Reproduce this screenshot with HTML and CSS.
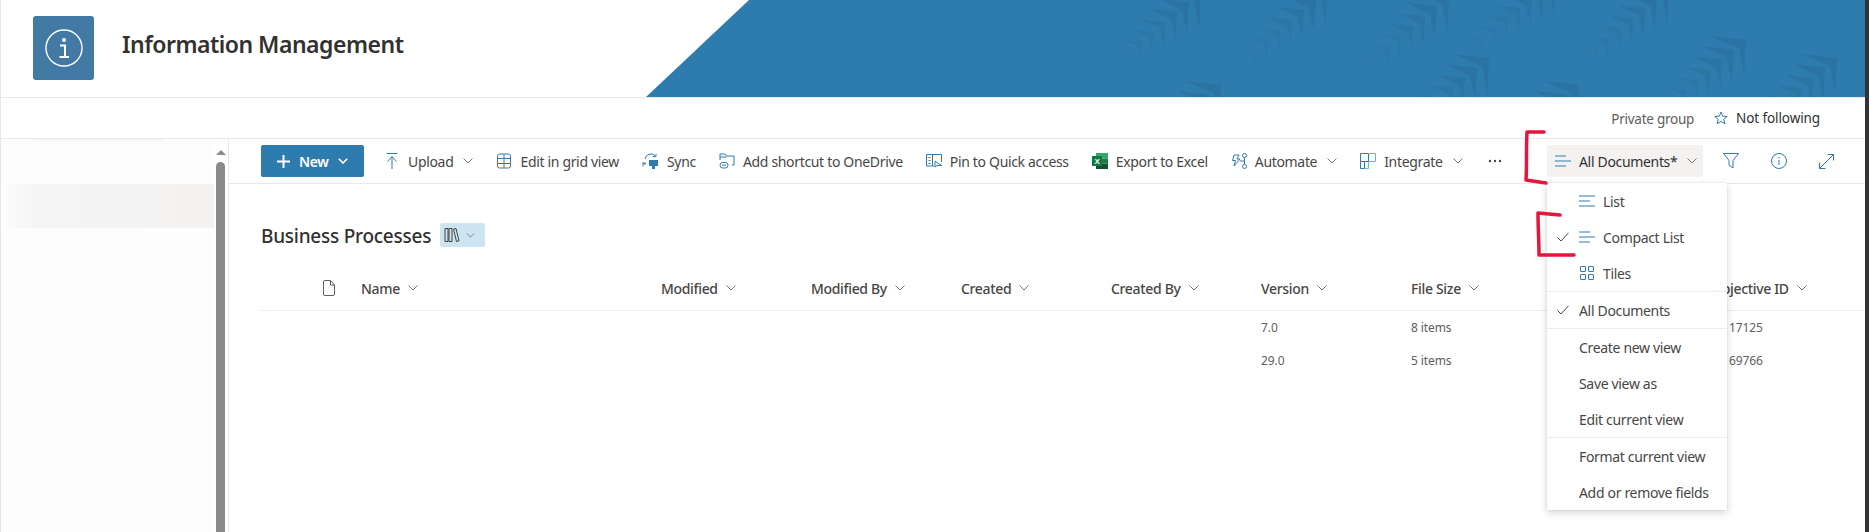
FILE: index.html
```html
<!DOCTYPE html>
<html lang="en">
<head>
<meta charset="utf-8">
<title>Information Management</title>
<link rel="stylesheet" href="styles.css">
</head>
<body>
<svg class="sprite" width="0" height="0" aria-hidden="true">
  <defs>
    <symbol id="chev" viewBox="0 0 10 6"><path d="M.5.5 5 5 9.500.5" fill="none" stroke="currentColor" stroke-width="1"/></symbol>
    <symbol id="chev-bold" viewBox="0 0 10 6"><path d="M.8.8 5 5 9.200.8" fill="none" stroke="currentColor" stroke-width="1.600"/></symbol>
    <symbol id="check" viewBox="0 0 12 10"><path d="M.5 5.500 4 9 11.500.8" fill="none" stroke="#484644" stroke-width="1"/></symbol>
    <symbol id="lines-compact" viewBox="0 0 16 12"><path d="M0 1h11M0 6h16M0 11h11" fill="none" stroke="#2e7cad" stroke-width="1"/></symbol>
    <symbol id="lines-list" viewBox="0 0 16 12"><path d="M0 1h16M0 6h11M0 11h16" fill="none" stroke="#2e7cad" stroke-width="1"/></symbol>
    <g id="chevs" fill="#296f9c">
      <polygon points="-36,-4 0,0 -2,36 -7,8" opacity=".7"/>
      <polygon points="-44,6 -12,10 -14,42 -19,18" opacity=".65"/>
      <polygon points="-52,17 -24,20 -25.5,48 -30,27" opacity=".6"/>
      <polygon points="-60,27.5 -36,30 -37,54 -41,36" opacity=".5"/>
      <polygon points="-68,38 -48,40 -49,60 -52,45" opacity=".42"/>
      <polygon points="-77,48 -60,50 -61,67 -64,54" opacity=".34"/>
      <polygon points="-86,59 -72,60 -73,74 -75,63" opacity=".26"/>
    </g>
  </defs>
</svg>

<div class="app">
  <header class="site-head">
    <div class="logo">
      <svg width="38" height="38" viewBox="0 0 38 38"><circle cx="19" cy="19" r="18" fill="none" stroke="#fff" stroke-width="1.400"/><circle cx="19" cy="11" r="2" fill="#fff"/><path d="M15 16.500h5v11M14.500 28h9.500" fill="none" stroke="#fff" stroke-width="2"/></svg>
    </div>
    <h1 class="site-title">Information Management</h1>
    <svg class="banner" width="1220" height="97" viewBox="645 0 1220 97" aria-hidden="true">
      <polygon points="646,97 749,0 1865,0 1865,97" fill="#2e7cad"/>
      <use href="#chevs" x="1201" y="-8"/>
      <use href="#chevs" x="1328" y="-10"/>
      <use href="#chevs" x="1449" y="-4"/>
      <use href="#chevs" x="1556" y="-22"/>
      <use href="#chevs" x="1669" y="-12"/>
      <use href="#chevs" x="1221" y="85"/>
      <use href="#chevs" x="1489" y="58"/>
      <use href="#chevs" x="1579" y="85"/>
      <use href="#chevs" x="1746" y="40"/>
      <use href="#chevs" x="1837" y="58"/>
    </svg>
  </header>

  <div class="status-bar">
    <span class="privacy">Private group</span>
    <span class="follow">
      <svg width="14" height="14" viewBox="0 0 14 14"><path d="M7 1 8.700 5.200 13.200 5.500 9.700 8.400 10.900 12.800 7 10.400 3.100 12.800 4.300 8.400.8 5.500 5.300 5.200Z" fill="none" stroke="#2e7cad"/></svg>
      Not following
    </span>
  </div>

  <div class="workspace">
    <aside class="side">
      <div class="side-nav">
        <div class="side-smudge"></div>
        <div class="side-active"></div>
      </div>
      <div class="scroll">
        <div class="scroll-arrow"></div>
        <div class="scroll-thumb"></div>
      </div>
    </aside>

    <main class="content">
      <div class="toolbar">
        <button class="new-btn">
          <svg width="13" height="13" viewBox="0 0 13 13"><path d="M6.500 0v13M0 6.500h13" stroke="#fff" stroke-width="2"/></svg>
          <span>New</span>
          <svg class="chev-new" width="10" height="6"><use href="#chev-bold"/></svg>
        </button>

        <span class="cmd">
          <svg class="ic" width="16" height="16" viewBox="0 0 16 16"><path d="M2.500.5h11M8 3.500V16M3.500 8.500 8 3.500l4.500 5" fill="none" stroke="#2e7cad"/></svg>
          Upload
          <svg class="chev" width="10" height="6"><use href="#chev"/></svg>
        </span>
        <span class="cmd">
          <svg class="ic" width="16" height="16" viewBox="0 0 16 16"><rect x="1.500" y="1" width="13" height="14" rx="2" fill="none" stroke="#2e7cad"/><path d="M1.500 5.500h13M1.500 10.500h13M8 1v14" stroke="#2e7cad"/></svg>
          Edit in grid view
        </span>
        <span class="cmd">
          <svg class="ic" width="17" height="16" viewBox="0 0 17 16"><path d="M3 6a6 6 0 0 1 10-3.500M14 1v2.500h-3M1 9.500l2.500 2.500M1 13.500V10h3" fill="none" stroke="#2e7cad"/><rect x="7" y="7" width="9" height="6" fill="#2e7cad"/><rect x="10" y="13" width="3" height="3" fill="#2e7cad"/></svg>
          Sync
        </span>
        <span class="cmd">
          <svg class="ic" width="16" height="16" viewBox="0 0 16 16"><path d="M1 7V1h5l1.500 2H15v9h-2M1 4h6.500" fill="none" stroke="#2e7cad"/><rect x="1" y="9.500" width="8" height="5.500" rx="2.700" fill="none" stroke="#2e7cad"/><path d="M3 12.200h4" stroke="#2e7cad"/></svg>
          Add shortcut to OneDrive
        </span>
        <span class="cmd">
          <svg class="ic" width="16" height="16" viewBox="0 0 16 16"><path d="M8 13H.5V1.500h15V9M2.500 4.500h2M2.500 7.500h2M2.500 10.500h2M6.500 2v11" fill="none" stroke="#2e7cad"/><path d="M9 8v6l2-1.500h4.500z" fill="none" stroke="#2e7cad"/></svg>
          Pin to Quick access
        </span>
        <span class="cmd">
          <svg class="ic" width="16" height="16" viewBox="0 0 16 16"><rect x="4" y="0" width="12" height="5.500" fill="#33a56e"/><rect x="4" y="5.500" width="12" height="5" fill="#1f7a4b"/><rect x="4" y="10.500" width="12" height="5.500" fill="#14522f"/><rect x="0" y="3" width="10" height="10" fill="#107c41"/><text x="5" y="11" class="xl">X</text></svg>
          Export to Excel
        </span>
        <span class="cmd">
          <svg class="ic" width="16" height="16" viewBox="0 0 16 16"><path d="M3 2h5L6 6h3l-6 7 1.500-5.500H1.500z" fill="none" stroke="#2e7cad"/><circle cx="13.500" cy="2.500" r="2" fill="none" stroke="#2e7cad"/><circle cx="13.500" cy="13.500" r="2" fill="none" stroke="#2e7cad"/><path d="M13.500 4.500v7M9 8h4.500" fill="none" stroke="#2e7cad"/></svg>
          Automate
          <svg class="chev" width="10" height="6"><use href="#chev"/></svg>
        </span>
        <span class="cmd">
          <svg class="ic" width="16" height="16" viewBox="0 0 16 16"><path d="M.5.500h8v8h-8zM8.500 8.500h-4v7h-4v-7" fill="none" stroke="#2e7cad"/><path d="M8.500.5h7v8h-7M8.500 8.500v7h-4" fill="none" stroke="#69b4dc"/></svg>
          Integrate
          <svg class="chev" width="10" height="6"><use href="#chev"/></svg>
        </span>
        <span class="dots">
          <svg width="14" height="4" viewBox="0 0 14 4"><circle cx="2" cy="2" r="1.200" fill="#484644"/><circle cx="7" cy="2" r="1.200" fill="#484644"/><circle cx="12" cy="2" r="1.200" fill="#484644"/></svg>
        </span>

        <button class="view-btn">
          <svg width="16" height="12"><use href="#lines-compact"/></svg>
          <span>All Documents*</span>
          <svg class="chev" width="10" height="6"><use href="#chev"/></svg>
        </button>
        <div class="tool-icons">
          <svg width="16" height="16" viewBox="0 0 16 16"><path d="M.5.500h15L10 7.500V15L6 12V7.500z" fill="none" stroke="#2e7cad"/></svg>
          <svg width="16" height="16" viewBox="0 0 16 16"><circle cx="8" cy="8" r="7.500" fill="none" stroke="#2e7cad"/><path d="M8 7v5" stroke="#2e7cad"/><circle cx="8" cy="4.800" r=".8" fill="#2e7cad"/></svg>
          <svg width="15" height="15" viewBox="0 0 15 15"><path d="M.5 14.500 14.500.5M8.500.5h6v6M.5 8.500v6h6" fill="none" stroke="#2e7cad"/></svg>
        </div>
      </div>

      <div class="library">
        <div class="lib-title">
          <h2>Business Processes</h2>
          <span class="lib-badge">
            <svg width="16" height="16" viewBox="0 0 16 16"><path d="M1 1.500h3v13H1zM5 1.500h3v13H5zM9.500 2.200l2.500-.7 3 12.300-2.500.7z" fill="none" stroke="#323130" stroke-width=".9"/></svg>
            <svg class="chev" width="9" height="5"><use href="#chev"/></svg>
          </span>
        </div>

        <div class="list">
          <div class="list-head">
            <div class="doc-cell">
              <svg width="12" height="16" viewBox="0 0 12 16"><path d="M.5 2A1.500 1.500 0 0 1 2 .5h5.500L11.500 5v9a1.500 1.500 0 0 1-1.500 1.500H2A1.500 1.500 0 0 1 .5 14zM7.500.5V5h4" fill="none" stroke="#605e5c"/></svg>
            </div>
            <div class="hcell">Name <svg class="chev" width="10" height="6"><use href="#chev"/></svg></div>
            <div class="hcell">Modified <svg class="chev" width="10" height="6"><use href="#chev"/></svg></div>
            <div class="hcell">Modified By <svg class="chev" width="10" height="6"><use href="#chev"/></svg></div>
            <div class="hcell">Created <svg class="chev" width="10" height="6"><use href="#chev"/></svg></div>
            <div class="hcell">Created By <svg class="chev" width="10" height="6"><use href="#chev"/></svg></div>
            <div class="hcell">Version <svg class="chev" width="10" height="6"><use href="#chev"/></svg></div>
            <div class="hcell">File Size <svg class="chev" width="10" height="6"><use href="#chev"/></svg></div>
            <div class="hcell"></div>
            <div class="hcell">Objective ID <svg class="chev" width="10" height="6"><use href="#chev"/></svg></div>
          </div>
          <div class="list-row">
            <div class="cell-version">7.0</div>
            <div class="cell">8 items</div>
            <div class="cell"></div>
            <div class="cell cell-id">17125</div>
          </div>
          <div class="list-row">
            <div class="cell-version">29.0</div>
            <div class="cell">5 items</div>
            <div class="cell"></div>
            <div class="cell cell-id">69766</div>
          </div>
        </div>
      </div>
    </main>
  </div>

  <div class="menu">
    <div class="mi"><span class="mi-check"></span><svg class="mi-ic" width="16" height="12"><use href="#lines-list"/></svg>List</div>
    <div class="mi"><span class="mi-check"><svg width="12" height="10"><use href="#check"/></svg></span><svg class="mi-ic" width="16" height="12"><use href="#lines-compact"/></svg>Compact List</div>
    <div class="mi"><span class="mi-check"></span><svg class="mi-ic" width="16" height="14" viewBox="0 0 16 14"><g fill="none" stroke="#2e7cad"><rect x="1.500" y=".5" width="5" height="5" rx=".5"/><rect x="9.500" y=".5" width="5" height="5" rx=".5"/><rect x="1.500" y="8.500" width="5" height="5" rx=".5"/><rect x="9.500" y="8.500" width="5" height="5" rx=".5"/></g></svg>Tiles</div>
    <div class="mi-sep"></div>
    <div class="mi"><span class="mi-check"><svg width="12" height="10"><use href="#check"/></svg></span>All Documents</div>
    <div class="mi-sep"></div>
    <div class="mi"><span class="mi-check"></span>Create new view</div>
    <div class="mi"><span class="mi-check"></span>Save view as</div>
    <div class="mi"><span class="mi-check"></span>Edit current view</div>
    <div class="mi-sep"></div>
    <div class="mi"><span class="mi-check"></span>Format current view</div>
    <div class="mi"><span class="mi-check"></span>Add or remove fields</div>
  </div>

  <svg class="ink" width="1869" height="532" viewBox="0 0 1869 532" aria-hidden="true">
    <path d="M1544 132 1527 132C1526 150 1527 165 1526 180L1546 183" />
    <path d="M1560 215 1538 213C1538 228 1539 240 1539 255L1574 255" />
  </svg>
</div>
</body>
</html>
```
FILE: styles.css
```css
* { box-sizing: border-box; }
html, body { margin: 0; padding: 0; height: 100%; }
body {
  background: #333;
  overflow: hidden;
  font-family: "Noto Sans", "Open Sans", "Liberation Sans", sans-serif;
  font-size: 14px;
  letter-spacing: -.33px;
  color: #484644;
}
.sprite { position: absolute; }
.app {
  position: relative;
  width: 1865px;
  height: 532px;
  background: #fff;
  border-left: 1px solid #e6e6e6;
  overflow: hidden;
}

/* site header */
.site-head {
  position: relative;
  height: 98px;
  border-bottom: 1px solid #e8e8e8;
  display: flex;
  align-items: flex-start;
  padding: 16px 0 0 32px;
}
.logo {
  width: 61px;
  height: 64px;
  background: #4279a5;
  border-radius: 3px;
  display: flex;
  align-items: center;
  justify-content: center;
}
.site-title {
  margin: 10px 0 0 28px;
  font-size: 23px;
  font-weight: 600;
  line-height: 36px;
  color: #323130;
  letter-spacing: -.5px;
}
.banner { position: absolute; left: 644px; top: 0; }

/* status */
.status-bar {
  height: 41px;
  border-bottom: 1px solid #e8e8e8;
  display: flex;
  justify-content: flex-end;
  align-items: flex-start;
  padding: 12px 45px 0 0;
  font-size: 13.500px;
  line-height: 18px;
}
.privacy { color: #605e5c; margin-right: 20px; letter-spacing: -.25px; }
.follow { color: #323130; display: inline-flex; align-items: center; gap: 8px; margin-top: -1px; letter-spacing: -.1px; }

/* workspace */
.workspace { display: flex; height: 393px; }
.side { width: 228px; flex: none; display: flex; border-right: 1px solid #e8e8e8; }
.side-nav { width: 213px; flex: none; background: #fdfdfd; }
.side-smudge { width: 130px; height: 2px; margin-left: 32px; background: #f5f5f5; }
.side-active {
  height: 44px;
  margin-top: 43px;
  background: linear-gradient(90deg, #fdfdfd 0, #f6f5f5 15%, #f3f2f1 100%);
}
.scroll { flex: 1; padding: 11px 2px 0 2px; }
.scroll-arrow {
  width: 0; height: 0;
  margin: 0 auto 7px;
  border: 5px solid transparent;
  border-top: 0;
  border-bottom: 5px solid #8a8a8a;
}
.scroll-thumb { width: 9px; height: 400px; background: #8a8a8a; border-radius: 5px 5px 0 0; }

.content { flex: 1; min-width: 0; }

/* toolbar */
.toolbar {
  height: 45px;
  border-bottom: 1px solid #e8e8e8;
  display: flex;
  align-items: center;
  gap: 23px;
  padding: 0 31px 0 32px;
}
.new-btn {
  width: 103px;
  height: 32px;
  border: 0;
  border-radius: 2px;
  background: #2e7cad;
  color: #fff;
  font: inherit;
  font-weight: 600;
  letter-spacing: inherit;
  display: flex;
  align-items: center;
  gap: 9px;
  padding: 0 0 0 16px;
  margin-right: -3px;
}
.chev-new { color: #fff; }
.cmd { display: inline-flex; align-items: center; gap: 8px; white-space: nowrap; color: #484644; }
.ic { flex: none; }
.chev { color: #797775; flex: none; margin-left: 2px; }
.xl { font-size: 8px; font-weight: 700; fill: #fff; text-anchor: middle; font-family: "Liberation Sans", sans-serif; }
.dots { display: inline-flex; margin-left: 2px; }
.view-btn {
  margin-left: auto;
  width: 156px;
  height: 32px;
  border: 0;
  border-radius: 2px;
  background: #f3f2f1;
  color: #323130;
  font: inherit;
  letter-spacing: inherit;
  display: flex;
  align-items: center;
  gap: 8px;
  padding: 0 0 0 8px;
}
.tool-icons { display: flex; align-items: center; gap: 32px; margin-left: -3px; }

/* library */
.library { padding-left: 32px; }
.lib-title { display: flex; align-items: center; height: 24px; margin-top: 39px; gap: 9px; }
.lib-title h2 { margin: 1px 0 0; font-size: 19px; font-weight: 500; line-height: 24px; color: #323130; letter-spacing: -.25px; }
.lib-badge {
  width: 45px;
  height: 24px;
  background: #cde5f2;
  border-radius: 2px;
  display: flex;
  align-items: center;
  padding-left: 4px;
  gap: 4px;
}
.list { margin-top: 21px; }
.list-head, .list-row {
  display: grid;
  grid-template-columns: 100px 300px repeat(8, 150px);
}
.list-head {
  height: 43px;
  padding-bottom: 2px;
  align-items: center;
  border-bottom: 1px solid #edebe9;
  font-weight: 500;
  color: #484644;
}
.doc-cell { padding-left: 62px; display: flex; }
.hcell { white-space: nowrap; display: flex; align-items: center; gap: 6px; }
.list-row { height: 33px; align-items: center; font-size: 12px; letter-spacing: -.1px; color: #605e5c; }
.cell-version { grid-column: 7; }
.cell-id { padding-left: 18px; }

/* view menu */
.menu {
  position: absolute;
  left: 1546px;
  top: 183px;
  width: 180px;
  background: #fff;
  box-shadow: 0 3px 8px rgba(0,0,0,.16), 0 0 2px rgba(0,0,0,.1);
  color: #484644;
}
.mi { height: 36px; display: flex; align-items: center; white-space: nowrap; }
.mi-check { width: 32px; flex: none; display: flex; padding-left: 10px; }
.mi-ic { margin-right: 8px; flex: none; }
.mi-sep { height: 1px; background: #edebe9; }

/* red annotation */
.ink { position: absolute; left: -1px; top: 0; pointer-events: none; }
.ink path { fill: none; stroke: #e2173b; stroke-width: 3.500; stroke-linecap: round; stroke-linejoin: round; }
```
